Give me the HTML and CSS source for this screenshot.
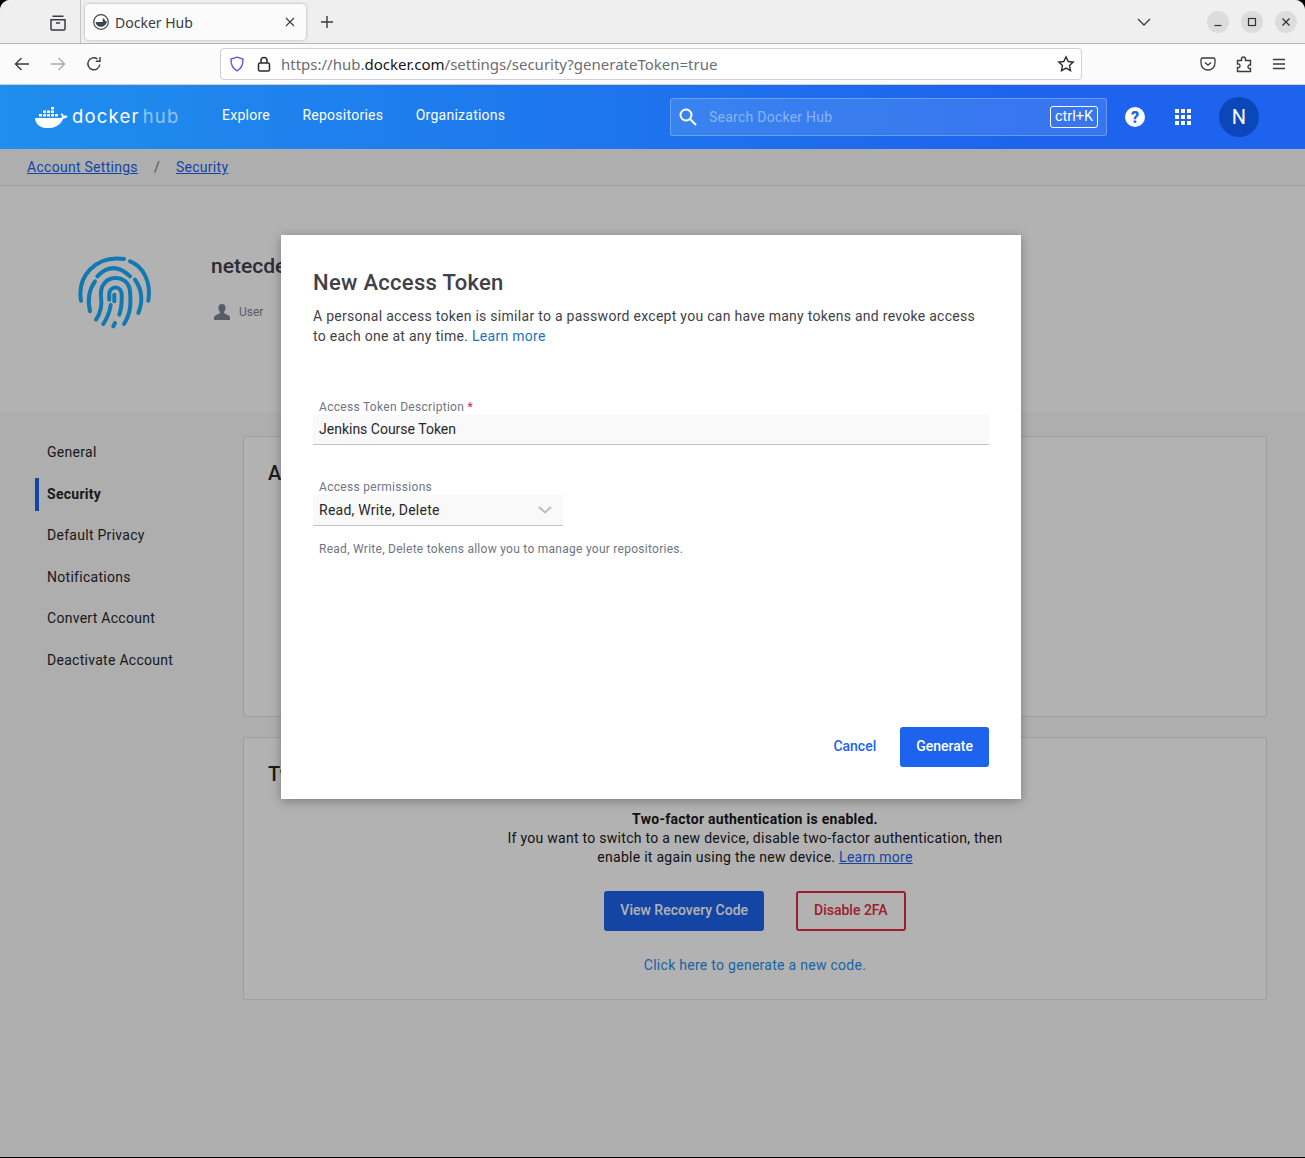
FILE: index.html
```html
<!DOCTYPE html>
<html lang="en">
<head>
    <meta charset="UTF-8">
    <title>Docker Hub</title>
    <link rel="stylesheet" href="styles.css">
</head>
<body>
<div class="window">

    <div class="tabbar">
        <div class="tab-views">
            <svg width="18" height="18" viewBox="0 0 18 18" fill="none" stroke="#3b3b40" stroke-width="1.5"><path d="M3.5 2.2h11M2 5.7h14v9a1.3 1.3 0 0 1-1.3 1.3H3.3A1.3 1.3 0 0 1 2 14.700zM7 9h4"/></svg>
        </div>
        <div class="tab">
            <svg width="16" height="16" viewBox="0 0 16 16"><circle cx="8" cy="8" r="7.300" fill="#fff" stroke="#3a4552" stroke-width="1.200"/><path d="M2.500 8h7.200V4.500h1.500l.8 2.300 2 .6c-.6 3-3 5.400-6.300 5.400-2.800 0-4.800-1.800-5.200-4.800z" fill="#3a4552"/></svg>
            <span class="tab-title">Docker Hub</span>
            <svg class="tab-close" width="10" height="10" viewBox="0 0 10 10" stroke="#3b3b40" stroke-width="1.100"><path d="M1 1l8 8M9 1l-8 8"/></svg>
        </div>
        <svg class="tab-new" width="14" height="14" viewBox="0 0 14 14" stroke="#3b3b40" stroke-width="1.400"><path d="M7 1v12M1 7h12"/></svg>
        <svg class="tab-list" width="14" height="8" viewBox="0 0 14 8" fill="none" stroke="#3b3b40" stroke-width="1.300"><path d="M1 1l6 6 6-6"/></svg>
        <div class="win-buttons">
            <span class="win-btn"><svg width="10" height="10" viewBox="0 0 10 10" stroke="#333" stroke-width="1.200"><path d="M1.500 8.500h7"/></svg></span>
            <span class="win-btn"><svg width="10" height="10" viewBox="0 0 10 10" fill="none" stroke="#333" stroke-width="1.200"><rect x="1.500" y="1.500" width="7" height="7"/></svg></span>
            <span class="win-btn"><svg width="10" height="10" viewBox="0 0 10 10" stroke="#333" stroke-width="1.300"><path d="M1.500 1.500l7 7M8.500 1.500l-7 7"/></svg></span>
        </div>
    </div>

    <div class="toolbar">
        <svg class="nav-icon" width="16" height="16" viewBox="0 0 16 16" fill="none" stroke="#3b3b40" stroke-width="1.400"><path d="M15 8H1.500M7.500 2l-6 6 6 6"/></svg>
        <svg class="nav-icon" width="16" height="16" viewBox="0 0 16 16" fill="none" stroke="#a9a9ad" stroke-width="1.400"><path d="M1 8h13.500M8.500 2l6 6-6 6"/></svg>
        <svg class="nav-icon" width="16" height="16" viewBox="0 0 16 16" fill="none" stroke="#3b3b40" stroke-width="1.400"><path d="M13.800 8.500A6 6 0 1 1 11.500 3M14 1v4.200H9.800"/></svg>
        <div class="urlbar">
            <svg class="shield" width="16" height="16" viewBox="0 0 16 16" fill="none" stroke="#5b5bd6" stroke-width="1.400"><path d="M8 1.200l6 1.800c.2 5.500-1.500 9.500-6 11.800C3.500 12.500 1.800 8.500 2 3z"/></svg>
            <svg class="lock" width="14" height="16" viewBox="0 0 14 16" fill="none" stroke="#2b2b30" stroke-width="1.500"><rect x="1.500" y="7" width="11" height="8" rx="1.500"/><path d="M4 7V4.500a3 3 0 0 1 6 0V7"/></svg>
            <span class="url"><span class="url-dim">https://hub.</span>docker.com<span class="url-dim">/settings/security?generateToken=true</span></span>
            <svg class="star" width="18" height="18" viewBox="0 0 18 18" fill="none" stroke="#2b2b30" stroke-width="1.400"><path d="M9 1.800l2.200 4.700 5 .6-3.700 3.500 1 5L9 13.100l-4.500 2.500 1-5L1.800 7.100l5-.6z"/></svg>
        </div>
        <div class="toolbar-right">
            <svg width="16" height="16" viewBox="0 0 16 16" fill="none" stroke="#3b3b40" stroke-width="1.300"><path d="M2.500 2h11A1.500 1.500 0 0 1 15 3.500V7A7 7 0 0 1 1 7V3.500A1.500 1.500 0 0 1 2.500 2zM5 6.500l3 2.700 3-2.700"/></svg>
            <svg width="16" height="18" viewBox="0 0 16 18" fill="none" stroke="#3b3b40" stroke-width="1.400"><path d="M1.500 5.500h4V4a2 2 0 0 1 4 0v1.500h5v4.500h-1.500a2 2 0 0 0 0 3.500h1.500v3h-13v-4h1.500a2 2 0 0 0 0-3.500H1.500z"/></svg>
            <svg width="14" height="12" viewBox="0 0 14 12" stroke="#3b3b40" stroke-width="1.300"><path d="M1 1.500h12M1 6h12M1 10.500h12"/></svg>
        </div>
    </div>

    <div class="page">
        <header class="hub-header">
            <a class="hub-logo">
                <svg width="33" height="23" viewBox="0 0 33 26" preserveAspectRatio="none" fill="#fff">
                    <path d="M0 13.500h26.500c.6-1.700 0-3.500-.8-4.300l.7-.9c1.300.7 2 1.500 2.400 2.600 1.300-.4 2.700-.2 4 .5-1 2.200-2.900 2.900-4.700 2.900C26.500 20 21 25 13 25 5 25 .4 20.500 0 13.500z"/>
                    <path d="M4 9h3v3H4zM8 9h3v3H8zM12 9h3v3h-3zM16 9h3v3h-3zM20 9h3v3h-3zM8 5h3v3H8zM12 5h3v3h-3zM16 5h3v3h-3zM16 1h3v3h-3z"/>
                </svg>
                <span class="logo-text">docker<span class="logo-hub">hub</span></span>
            </a>
            <nav class="hub-nav">
                <a>Explore</a>
                <a>Repositories</a>
                <a>Organizations</a>
            </nav>
            <div class="hub-search">
                <svg width="18" height="18" viewBox="0 0 18 18" fill="none" stroke="#fff" stroke-width="2"><circle cx="7" cy="7" r="5.500"/><path d="M11 11l6 6"/></svg>
                <span class="search-text">Search Docker Hub</span>
                <span class="search-key">ctrl+K</span>
            </div>
            <svg class="hub-help" width="20" height="20" viewBox="0 0 20 20"><circle cx="10" cy="10" r="10" fill="#fff"/><text x="10" y="15.500" text-anchor="middle" class="help-mark">?</text></svg>
            <div class="hub-grid"><i></i><i></i><i></i><i></i><i></i><i></i><i></i><i></i><i></i></div>
            <div class="hub-avatar">N</div>
        </header>

        <div class="breadcrumb">
            <a>Account Settings</a>
            <span class="crumb-sep">/</span>
            <a>Security</a>
        </div>

        <section class="profile">
            <svg class="fingerprint" width="80" height="80" viewBox="0 0 80 80" fill="none" stroke="#18aeff" stroke-width="4" stroke-linecap="round">
                <path d="M6 48.700C2 25 20 3 49 7"/>
                <path d="M55 9.300C68 14 76.500 30 73.300 48.700"/>
                <path d="M22.300 24.300Q38 8 55 24.300"/>
                <path d="M15 59.300c-2.500-11-1.500-21 5-30"/>
                <path d="M60 27.700c7 10 8 22 3.300 33.300"/>
                <path d="M21 67.700c5-7 6-16 5-24C24 22 53 20 55 39c1 12 1 22-6 33"/>
                <path d="M28.300 72c4-6 6.300-12 7.400-19"/>
                <path d="M34.300 47.700V41c1-7 12-8 12.400 1.700.3 7-.4 14-2.400 20"/>
                <path d="M39.300 42.700v6.600M38.300 74.300L40 71"/>
            </svg>
            <div class="profile-info">
                <h1 class="profile-name">netecdevops</h1>
                <div class="profile-role">
                    <svg width="16" height="16" viewBox="0 0 16 16" fill="#7e8594"><path d="M8 0c2.300 0 3.600 1.600 3.600 3.800 0 1.700-.7 3.200-1.500 4.200v1.300l4.200 2c1 .5 1.700 1.300 1.700 2.400V16H0v-2.300c0-1.100.7-1.900 1.700-2.400l4.200-2V8C5.100 7 4.400 5.500 4.400 3.800 4.400 1.600 5.700 0 8 0z"/></svg>
                    <span>User</span>
                </div>
            </div>
        </section>

        <div class="settings">
            <ul class="side-menu">
                <li>General</li>
                <li class="active">Security</li>
                <li>Default Privacy</li>
                <li>Notifications</li>
                <li>Convert Account</li>
                <li>Deactivate Account</li>
            </ul>
            <div class="cards">
                <section class="card card-tokens">
                    <h2>Access Tokens</h2>
                </section>
                <section class="card card-2fa">
                    <h2>Two-Factor Authentication</h2>
                    <div class="tfa-body">
                        <p><b>Two-factor authentication is enabled.</b><br>If you want to switch to a new device, disable two-factor authentication, then<br>enable it again using the new device. <a class="tfa-learn">Learn more</a></p>
                        <div class="tfa-buttons">
                            <button class="btn btn-primary">View Recovery Code</button>
                            <button class="btn btn-danger">Disable 2FA</button>
                        </div>
                        <a class="tfa-new">Click here to generate a new code.</a>
                    </div>
                </section>
            </div>
        </div>

        <div class="backdrop">
            <div class="modal">
                <h3 class="modal-title">New Access Token</h3>
                <p class="modal-text">A personal access token is similar to a password except you can have many tokens and revoke access to each one at any time. <a>Learn more</a></p>
                <label class="field-label field-label-first">Access Token Description <span class="req">*</span></label>
                <div class="field">Jenkins Course Token</div>
                <label class="field-label field-label-second">Access permissions</label>
                <div class="field field-select">
                    <span>Read, Write, Delete</span>
                    <svg width="14" height="8" viewBox="0 0 14 8" fill="none" stroke="#bdbdbd" stroke-width="2"><path d="M1 1l6 5.500L13 1"/></svg>
                </div>
                <p class="field-help">Read, Write, Delete tokens allow you to manage your repositories.</p>
                <div class="modal-actions">
                    <button class="btn btn-text">Cancel</button>
                    <button class="btn btn-primary">Generate</button>
                </div>
            </div>
        </div>
    </div>
</div>
</body>
</html>
```

FILE: styles.css
```css
* {
    box-sizing: border-box;
}
html, body {
    margin: 0;
    background: #000;
}
body {
    font-family: Roboto, Arial, sans-serif;
    color: #27272a;
}
a {
    cursor: pointer;
}
.window {
    width: 1305px;
    height: 1157px;
    border-radius: 10px 10px 0 0;
    overflow: hidden;
    display: flex;
    flex-direction: column;
    background: #fff;
}

/* browser chrome */
.tabbar {
    height: 44px;
    background: #efefef;
    border-bottom: 1px solid #b4b4b4;
    display: flex;
    align-items: center;
    flex-shrink: 0;
}
.tab-views {
    width: 81px;
    height: 43px;
    border-right: 1px solid #c4c4c4;
    padding: 14px 0 0 49px;
}
.tab {
    width: 221px;
    height: 36px;
    margin: 1px 0 0 4px;
    padding: 0 11px 0 8px;
    background: #fbfbfb;
    border-radius: 4px;
    box-shadow: 0 0 3px rgba(0, 0, 0, 0.3);
    display: flex;
    align-items: center;
}
.tab-title {
    font-family: "Noto Sans", sans-serif;
    font-size: 14px;
    color: #3b3b40;
    margin-left: 6px;
    flex: 1;
}
.tab-new {
    margin: 1px 0 0 14px;
}
.tab-list {
    margin-left: 803px;
}
.win-buttons {
    display: flex;
    gap: 12px;
    margin-left: 56px;
}
.win-btn {
    width: 22px;
    height: 22px;
    border-radius: 50%;
    background: #dcdcdc;
    display: flex;
    align-items: center;
    justify-content: center;
}
.toolbar {
    height: 41px;
    background: #fbfbfb;
    border-bottom: 1px solid #d0d0d0;
    display: flex;
    align-items: center;
    padding-left: 14px;
    flex-shrink: 0;
}
.nav-icon {
    margin-right: 20px;
}
.nav-icon:nth-child(3) {
    margin-right: 118px;
}
.urlbar {
    width: 862px;
    height: 32px;
    padding: 0 6px 0 8px;
    background: #fff;
    border: 1px solid #cfcfd4;
    border-radius: 4px;
    display: flex;
    align-items: center;
}
.lock {
    margin-left: 12px;
}
.url {
    font-family: "Noto Sans", sans-serif;
    font-size: 15px;
    margin-left: 10px;
    flex: 1;
    color: #15141a;
}
.url-dim {
    color: #6d6d72;
}
.toolbar-right {
    display: flex;
    align-items: center;
    gap: 20px;
    margin-left: 118px;
}

/* docker hub */
.page {
    position: relative;
    flex: 1;
    background: #f9f9fa;
    display: flex;
    flex-direction: column;
}
.hub-header {
    height: 64px;
    background: linear-gradient(90deg, #1f8eed 0%, #1d63ed 80%);
    display: flex;
    align-items: center;
    padding-left: 35px;
    color: #fff;
    flex-shrink: 0;
}
.hub-logo {
    display: flex;
    align-items: center;
    width: 187px;
}
.logo-text {
    font-family: Inter, sans-serif;
    font-size: 18.500px;
    letter-spacing: 1.200px;
    margin: -2px 0 0 4px;
}
.logo-hub {
    opacity: 0.5;
    margin-left: 3px;
}
.hub-nav {
    display: flex;
    gap: 32.500px;
    width: 448px;
    font-size: 14px;
    letter-spacing: 0.250px;
    margin-top: -4px;
}
.hub-search {
    width: 437px;
    height: 38px;
    background: rgba(255, 255, 255, 0.12);
    border: 1px solid rgba(255, 255, 255, 0.25);
    border-radius: 3px;
    display: flex;
    align-items: center;
    padding: 0 8px;
}
.search-text {
    flex: 1;
    font-size: 14px;
    letter-spacing: 0.250px;
    color: #8ab4f5;
    margin-left: 12px;
}
.search-key {
    border: 1px solid #fff;
    border-radius: 3px;
    font-size: 14.500px;
    line-height: 20px;
    padding: 0 4px;
}
.hub-help {
    margin-left: 18px;
}
.help-mark {
    font-family: Roboto, sans-serif;
    font-size: 16px;
    font-weight: 900;
    fill: #1d63ed;
}
.hub-grid {
    display: grid;
    grid-template-columns: repeat(3, 4px);
    gap: 2px;
    margin-left: 30px;
}
.hub-grid i {
    height: 4px;
    background: #fff;
}
.hub-avatar {
    width: 40px;
    height: 40px;
    border-radius: 50%;
    background: #0b47b8;
    margin-left: 28px;
    display: flex;
    align-items: center;
    justify-content: center;
    font-size: 20px;
}
.breadcrumb {
    height: 37px;
    background: #f9f9fa;
    border-bottom: 1px solid #e4e4e7;
    display: flex;
    align-items: center;
    padding-left: 27px;
    font-size: 14px;
    letter-spacing: 0.280px;
    flex-shrink: 0;
}
.breadcrumb a {
    color: #1d63ed;
    text-decoration: underline;
}
.crumb-sep {
    color: #6c7280;
    margin: 0 16px;
}
.profile {
    height: 226px;
    background: #fff;
    display: flex;
    flex-shrink: 0;
    padding: 66px 0 0 75px;
}
.fingerprint {
    flex-shrink: 0;
}
.profile-info {
    margin-left: 56px;
}
.profile-name {
    font-size: 21px;
    font-weight: 500;
    color: #3f4149;
    margin: 0;
    line-height: 28px;
}
.profile-role {
    display: flex;
    align-items: center;
    gap: 9px;
    margin-top: 24px;
    padding-left: 3px;
    font-size: 12px;
    color: #7e8594;
}
.settings {
    display: flex;
    flex: 1;
    padding: 24px 38px 0 35px;
}
.side-menu {
    list-style: none;
    margin: 0;
    padding: 0;
    width: 208px;
    font-size: 14px;
    letter-spacing: 0.280px;
}
.side-menu li {
    height: 33px;
    line-height: 33px;
    margin-bottom: 8.600px;
    padding-left: 12px;
    color: #27272a;
}
.side-menu li.active {
    border-left: 4px solid #1d63ed;
    padding-left: 8px;
    font-weight: 700;
    margin-top: 0;
}
.cards {
    flex: 1;
}
.card {
    background: #fff;
    border: 1px solid #e1e2e6;
    border-radius: 2px;
    padding: 25px 24px 24px;
}
.card h2 {
    font-size: 20px;
    font-weight: 500;
    margin: 0;
    line-height: 22px;
}
.card-tokens {
    height: 281px;
}
.card-2fa {
    height: 263px;
    margin-top: 20px;
}
.tfa-body {
    text-align: center;
    margin-top: 25px;
    font-size: 14px;
    letter-spacing: 0.280px;
    color: #17171a;
}
.tfa-body p {
    margin: 0;
    line-height: 19px;
}
.tfa-learn {
    color: #1d63ed;
    text-decoration: underline;
}
.tfa-buttons {
    display: flex;
    justify-content: center;
    gap: 32px;
    margin-top: 24px;
}
.tfa-new {
    display: block;
    margin-top: 26px;
    color: #1f8eed;
}
.btn {
    height: 40px;
    padding: 0 16px 2px;
    border: 0;
    border-radius: 3px;
    font-family: Roboto, sans-serif;
    font-size: 14px;
    font-weight: 500;
    background: none;
}
.btn-primary {
    background: #1d63ed;
    color: #fff;
}
.btn-danger {
    border: 2px solid #e22b40;
    color: #e22b40;
}
.btn-text {
    color: #1d63ed;
}

/* dialog over the dimmed page, the hub header stays lit */
.backdrop {
    position: absolute;
    inset: 64px 0 0 0;
    background: rgba(0, 0, 0, 0.3);
    padding: 86px 0 0 281px;
}
.modal {
    width: 740px;
    height: 564px;
    background: #fff;
    padding: 33px 32px 32px;
    box-shadow: 0 2px 10px rgba(0, 0, 0, 0.3);
    display: flex;
    flex-direction: column;
}
.modal-title {
    font-size: 22px;
    font-weight: 500;
    letter-spacing: 0.300px;
    color: #3f4149;
    margin: 0;
    line-height: 30px;
}
.modal-text {
    font-size: 14px;
    letter-spacing: 0.280px;
    line-height: 20px;
    margin: 8px 0 0;
    color: #3f4149;
}
.modal-text a {
    color: #1d6fc4;
}
.field-label {
    font-size: 12px;
    letter-spacing: 0.300px;
    color: #6f7585;
    padding-left: 6px;
    line-height: 16px;
}
.field-label-first {
    margin-top: 53px;
}
.field-label-second {
    margin-top: 34px;
}
.req {
    color: #e2143c;
}
.field {
    height: 30px;
    background: #f9f9f9;
    border-bottom: 1px solid #bfc2c9;
    padding-left: 6px;
    font-size: 14px;
    line-height: 29px;
    color: #27272a;
    flex-shrink: 0;
}
.field-select {
    width: 250px;
    height: 31px;
    margin-top: 0;
    display: flex;
    justify-content: space-between;
    align-items: center;
    padding-right: 11px;
    letter-spacing: 0.250px;
    line-height: normal;
}
.field-help {
    font-size: 12px;
    letter-spacing: 0.270px;
    color: #6f7585;
    margin: 16px 0 0 6px;
}
.modal-actions {
    margin-top: auto;
    display: flex;
    justify-content: flex-end;
    gap: 8px;
}
```
